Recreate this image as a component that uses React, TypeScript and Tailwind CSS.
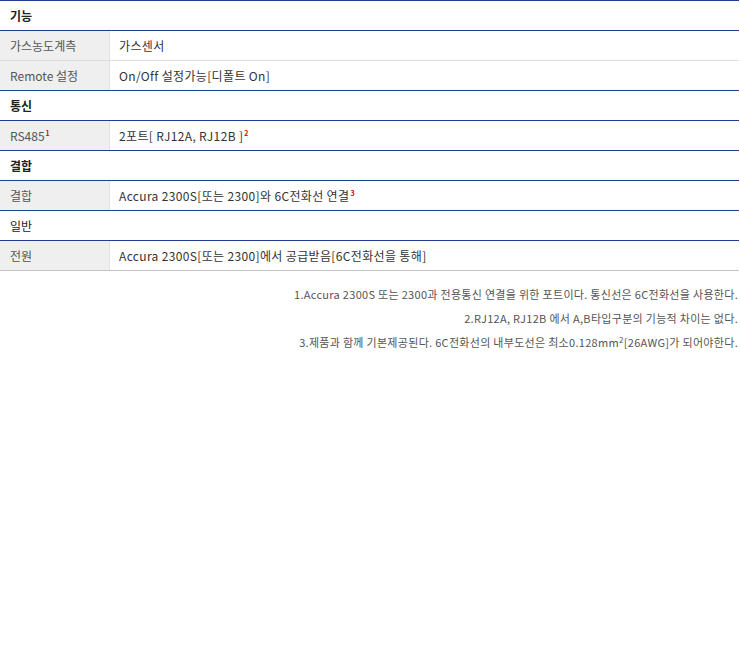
import React from "react";

const font = { fontFamily: '"Noto Sans CJK KR", "Noto Sans", sans-serif' };

function Sup({ n }: { n: string }) {
  return <span className="inline-block align-top text-[7px] leading-[7px] text-[#e00000] font-bold mt-[1px] ml-[1px]">{n}</span>;
}

function Header({ title, bold = true }: { title: string; bold?: boolean }) {
  return (
    <div className={`h-[30px] flex items-center pl-[10px] border-b border-[#1d3f8f] text-[12px] text-[#222] ${bold ? "font-bold" : "font-normal"}`}>
      {title}
    </div>
  );
}

function Row({ label, value, last = "blue" }: { label: React.ReactNode; value: React.ReactNode; last?: "blue" | "grey" | "bottom" }) {
  const b = last === "blue" ? "border-[#1d3f8f]" : last === "grey" ? "border-[#dcdcdc]" : "border-[#c4c4c4]";
  return (
    <div className={`h-[30px] flex border-b ${b}`}>
      <div className="w-[110px] bg-[#efefef] border-r border-[#e2e2e2] flex items-center pl-[10px] text-[12px] text-[#555]">{label}</div>
      <div className="flex-1 flex items-center pl-[9px] text-[12px] text-[#333] tracking-[0.35px]">{value}</div>
    </div>
  );
}

export default function App() {
  return (
    <div className="w-[740px] h-[650px] bg-white" style={font}>
      <div className="w-[739px] border-t border-[#1d3f8f]">
        <Header title="기능" />
        <Row label="가스농도계측" value="가스센서" last="grey" />
        <Row label="Remote 설정" value="On/Off 설정가능[디폴트 On]" />
        <Header title="통신" />
        <Row label={<span className="leading-[14px]">RS485<Sup n="1" /></span>} value={<span className="leading-[14px]">2포트[ RJ12A, RJ12B ]<Sup n="2" /></span>} />
        <Header title="결합" />
        <Row label="결합" value={<span className="leading-[14px]">Accura 2300S[또는 2300]와 6C전화선 연결<Sup n="3" /></span>} />
        <Header title="일반" bold={false} />
        <Row label="전원" value="Accura 2300S[또는 2300]에서 공급받음[6C전화선을 통해]" last="bottom" />
      </div>
      <div className="mt-[11px] pr-[2px] text-right text-[11px] leading-[24px] text-[#555] tracking-[0.3px]">
        <p>1.Accura 2300S 또는 2300과 전용통신 연결을 위한 포트이다. 통신선은 6C전화선을 사용한다.</p>
        <p>2.RJ12A, RJ12B 에서 A,B타입구분의 기능적 차이는 없다.</p>
        <p>3.제품과 함께 기본제공된다. 6C전화선의 내부도선은 최소0.128mm<sup className="text-[8px]">2</sup>[26AWG]가 되어야한다.</p>
      </div>
    </div>
  );
}
